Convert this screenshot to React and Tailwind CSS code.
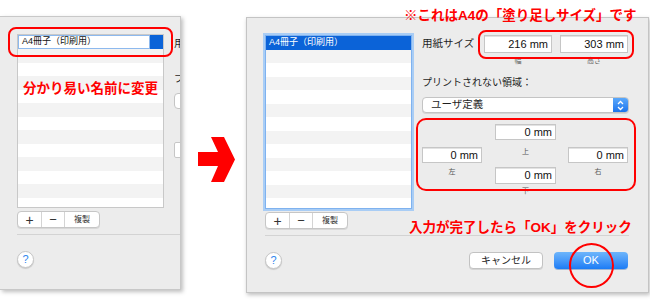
// Two macOS "paper size" dialogs with red annotations: before (cropped) → after.

const FONT = "font-['Liberation_Sans','Noto_Sans_CJK_JP',sans-serif]";

const ROWS = Array.from({ length: 13 }, (_, i) => i);

function Field({ className, value }) {
  return (
    <div
      className={`flex items-center justify-end border border-[#c6c6c6] bg-white pr-[3px] text-[11px] text-[#111] shadow-[inset_0_1px_0_#e2e2e2] ${className}`}
    >
      {value}
    </div>
  );
}

function List({ editing }) {
  return (
    <div
      className={
        editing
          ? "m-[2px] h-[174px] w-[147px] overflow-hidden border border-[#c8c8c8] bg-white"
          : "m-[2px] h-[174px] w-[147px] overflow-hidden border border-[#7fb2ef] bg-white shadow-[0_0_0_2px_#a9cdf5]"
      }
    >
      {ROWS.map((i) =>
        i === 0 ? (
          editing ? (
            <div key={i} className="flex h-[14px] bg-[#0b63d8]">
              <div className="flex w-[132px] items-center border border-[#8db9ee] bg-white pl-[3px] text-[9px] text-[#111]">
                A4冊子（印刷用）
              </div>
            </div>
          ) : (
            <div key={i} className="flex h-[13.5px] items-center bg-[#0b63d8] pl-[3px] text-[9px] text-white">
              A4冊子（印刷用）
            </div>
          )
        ) : (
          <div key={i} className={i % 2 ? "h-[13.5px] bg-[#f3f3f3]" : "h-[13.5px] bg-white"} />
        )
      )}
    </div>
  );
}

function Segmented() {
  return (
    <div className="ml-[2px] mt-[3px] flex h-[17px] w-[83px] overflow-hidden rounded-[4px] border border-[#c6c6c6] bg-white text-[#333] shadow-[0_1px_0_#d8d8d8]">
      <div className="flex w-[24px] items-center justify-center border-r border-[#d4d4d4] text-[14px] font-light leading-none">+</div>
      <div className="flex w-[23px] items-center justify-center border-r border-[#d4d4d4] text-[13px] font-light leading-none">−</div>
      <div className="flex flex-1 items-center justify-center text-[8px]">複製</div>
    </div>
  );
}

function Help() {
  return (
    <div className="flex h-[17px] w-[17px] items-center justify-center rounded-full border border-[#c6c6c6] bg-white text-[11px] leading-none text-[#2f86ee] shadow-[0_1px_1px_rgba(0,0,0,0.15)]">
      ?
    </div>
  );
}

// Only the sliver of the settings column that shows at the cropped window's edge.
function SettingsStub() {
  return (
    <div className="ml-[8px] w-[6px] shrink-0 overflow-hidden pt-[2px] text-[#1e1e1e]">
      <div className="h-[18px] w-[6px] overflow-hidden text-[10.5px] leading-[18px]">用</div>
      <div className="mt-[21px] h-[12px] w-[6px] overflow-hidden text-[10px] leading-[12px]">プ</div>
      <div className="mt-[8px] h-[16px] w-[20px] rounded-[4px] border border-[#c4c4c4] bg-white" />
      <div className="mt-[33px] h-[16px] w-[20px] rounded-[2px] border border-[#c6c6c6] bg-white" />
    </div>
  );
}

function Settings() {
  return (
    <div className="ml-[8px] w-[207px] shrink-0 pt-[2px] text-[#1e1e1e]">
      <div className="flex h-[18px] items-center">
        <span className="w-[62px] text-[10.5px]">用紙サイズ</span>
        <Field className="h-[18px] w-[68px]" value="216 mm" />
        <Field className="ml-[8px] h-[18px] w-[68px]" value="303 mm" />
      </div>
      <div className="mt-[3px] flex pl-[62px] text-[7px] leading-[9px] text-[#666]">
        <span className="w-[68px] text-center">幅</span>
        <span className="ml-[8px] w-[68px] text-center">高さ</span>
      </div>
      <div className="mt-[12px] text-[10px] leading-[12px]">プリントされない領域：</div>

      <div className="mt-[8px] flex h-[16px] w-[207px] items-center overflow-hidden rounded-[4px] border border-[#c4c4c4] bg-white shadow-[0_1px_0_#d6d6d6]">
        <span className="pl-[8px] text-[10.5px]">ユーザ定義</span>
        <div className="ml-auto flex h-full w-[15px] items-center justify-center bg-gradient-to-b from-[#5aa8fb] to-[#1b74ec]">
          <svg width="7" height="11" viewBox="0 0 7 11" fill="none" stroke="white" strokeWidth="1.3">
            <path d="M1 4 L3.5 1.5 L6 4" />
            <path d="M1 7 L3.5 9.5 L6 7" />
          </svg>
        </div>
      </div>

      <div className="mt-[11px] flex items-start text-[7px] leading-[9px] text-[#555]">
        <div className="mt-[23px] w-[60px]">
          <Field className="h-[16px] w-[60px]" value="0 mm" />
          <div className="mt-[4px] text-center">左</div>
        </div>
        <div className="ml-[13px] w-[61px]">
          <Field className="h-[16px] w-[61px]" value="0 mm" />
          <div className="mt-[7px] text-center">上</div>
          <Field className="mt-[11px] h-[17px] w-[61px]" value="0 mm" />
          <div className="mt-[2px] text-center">下</div>
        </div>
        <div className="ml-[12px] mt-[23px] w-[60px]">
          <Field className="h-[16px] w-[60px]" value="0 mm" />
          <div className="mt-[4px] text-center">右</div>
        </div>
      </div>
    </div>
  );
}

function Dialog({ cropped }) {
  return (
    <div className={`flex h-full flex-col bg-[#ececec] pl-[16px] pt-[15px] ${cropped ? "w-[182px]" : "w-[401px]"}`}>
      <div className="flex">
        <div className="w-[151px] shrink-0">
          <List editing={cropped} />
          <Segmented />
        </div>
        {cropped ? <SettingsStub /> : <Settings />}
      </div>

      <div className={`ml-[2px] mt-[6px] h-px bg-[#d3d3d3] ${cropped ? "w-[164px]" : "w-[364px]"}`} />

      <div className="ml-[2px] mt-[16px] flex w-[363px] items-center">
        <Help />
        {!cropped && (
          <div className="ml-auto flex gap-[11px]">
            <div className="flex h-[17px] w-[74px] items-center justify-center rounded-[4px] border border-[#c2c2c2] bg-white text-[10px] text-[#222] shadow-[0_1px_0_#d4d4d4]">
              キャンセル
            </div>
            <div className="flex h-[17px] w-[74px] items-center justify-center rounded-[4px] bg-gradient-to-b from-[#6db5fb] to-[#1a7cf5] text-[11px] text-white shadow-[0_1px_0_#9fb6d4]">
              OK
            </div>
          </div>
        )}
      </div>
    </div>
  );
}

export default function App() {
  return (
    <div className={`relative flex h-[301px] w-[650px] overflow-hidden bg-white ${FONT}`}>
      {/* before: cropped dialog */}
      <div className="relative mt-[16px] h-[274px] w-[181px] shrink-0 overflow-hidden border-r border-t border-b border-[#c8c8c8] shadow-[2px_2px_4px_rgba(0,0,0,0.25)]">
        <div className="-ml-px h-full">
          <Dialog cropped />
        </div>
        <div className="absolute left-[8px] top-[10px] h-[30px] w-[165px] rounded-[8px] border-2 border-[#f00]" />
        <div className="absolute left-[23px] top-[64px] text-[13.5px] font-bold leading-[16px] text-[#f00]">
          分かり易い名前に変更
        </div>
      </div>

      <svg className="ml-[17px] mt-[137px] shrink-0 self-start" width="38" height="46" viewBox="0 0 38 46">
        <polygon points="0,15 20,15 13,0 26,0 37,22.5 26,45 13,45 20,29 0,29" fill="#f00" />
      </svg>

      {/* after: full dialog */}
      <div className="relative ml-[10px] mt-[17px] h-[276px] w-[403px] shrink-0 overflow-hidden border border-[#c4c4c4] shadow-[1px_2px_4px_rgba(0,0,0,0.25)]">
        <Dialog />
        <div className="absolute left-[231px] top-[12px] h-[29px] w-[156px] rounded-[8px] border-2 border-[#f00]" />
        <div className="absolute left-[169px] top-[100px] h-[73px] w-[220px] rounded-[10px] border-2 border-[#f00]" />
        <div className="absolute left-[162px] top-[202px] text-[13.5px] font-bold leading-[16px] text-[#f00]">
          入力が完了したら「OK」をクリック
        </div>
        <div className="absolute left-[322px] top-[225px] h-[45px] w-[45px] rounded-full border-2 border-[#f00]" />
      </div>

      <div className="absolute left-[404px] top-[8px] text-[13.5px] font-bold leading-[16px] text-[#f00]">
        ※これはA4の「塗り足しサイズ」です
      </div>
    </div>
  );
}
